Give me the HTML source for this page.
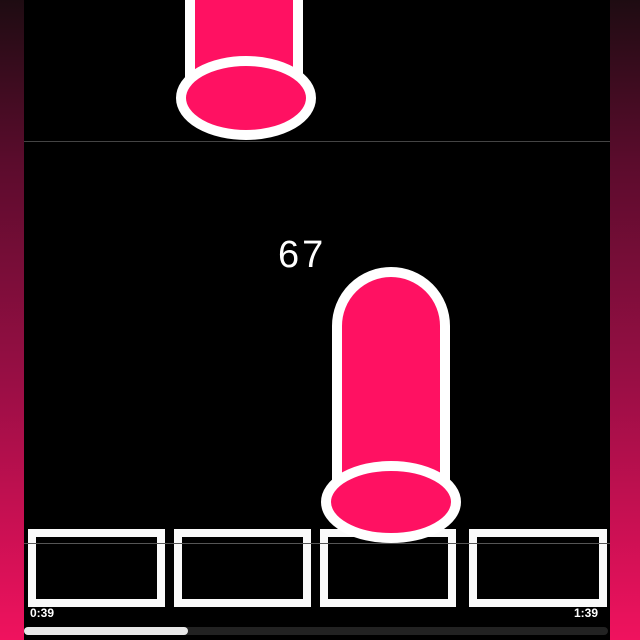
<!DOCTYPE html>
<html><head><style>
body{margin:0;width:640px;height:640px;background:#000;position:relative;overflow:hidden;font-family:"Liberation Sans",sans-serif}
.side{position:absolute;top:0;height:640px;background:linear-gradient(#1e0c12,#5a0c2c 25%,#9a0e45 60%,#f0125e 100%)}
.b{position:absolute;top:529px;height:62px;border:8px solid #fafafa;background:#000}
.t{position:absolute;top:606px;color:#fff;font-weight:bold;font-size:12px}
</style></head><body>
<div class="side" style="left:0;width:24px"></div>
<div class="side" style="left:610px;width:30px"></div>
<div style="position:absolute;left:24px;top:141px;width:586px;height:1px;background:#444"></div>
<div class="b" style="left:28px;width:121px"></div>
<div class="b" style="left:174px;width:121px"></div>
<div class="b" style="left:320px;width:120px"></div>
<div class="b" style="left:469px;width:122px"></div>
<div style="position:absolute;left:24px;top:543px;width:586px;height:1px;background:#555"></div>
<svg width="640" height="640" style="position:absolute;left:0;top:0">
<rect x="190" y="-10" width="108" height="100" fill="#ff1162" stroke="#fff" stroke-width="10"/>
<ellipse cx="246" cy="98" rx="65" ry="37" fill="#ff1162" stroke="#fff" stroke-width="10"/>
<path d="M337 500 V326 a54 54 0 0 1 108 0 V500 Z" fill="#ff1162" stroke="#fff" stroke-width="10"/>
<ellipse cx="391" cy="502" rx="65" ry="36" fill="#ff1162" stroke="#fff" stroke-width="10"/>
<text x="278" y="267" fill="#fff" font-size="38" font-family="Liberation Sans" letter-spacing="3">67</text>
</svg>
<div class="t" style="left:30px">0:39</div>
<div class="t" style="left:574px">1:39</div>
<div style="position:absolute;left:24px;top:627px;width:584px;height:8px;border-radius:4px;background:#222"></div>
<div style="position:absolute;left:24px;top:627px;width:164px;height:8px;border-radius:4px;background:#e8e8e8"></div>
</body></html>
